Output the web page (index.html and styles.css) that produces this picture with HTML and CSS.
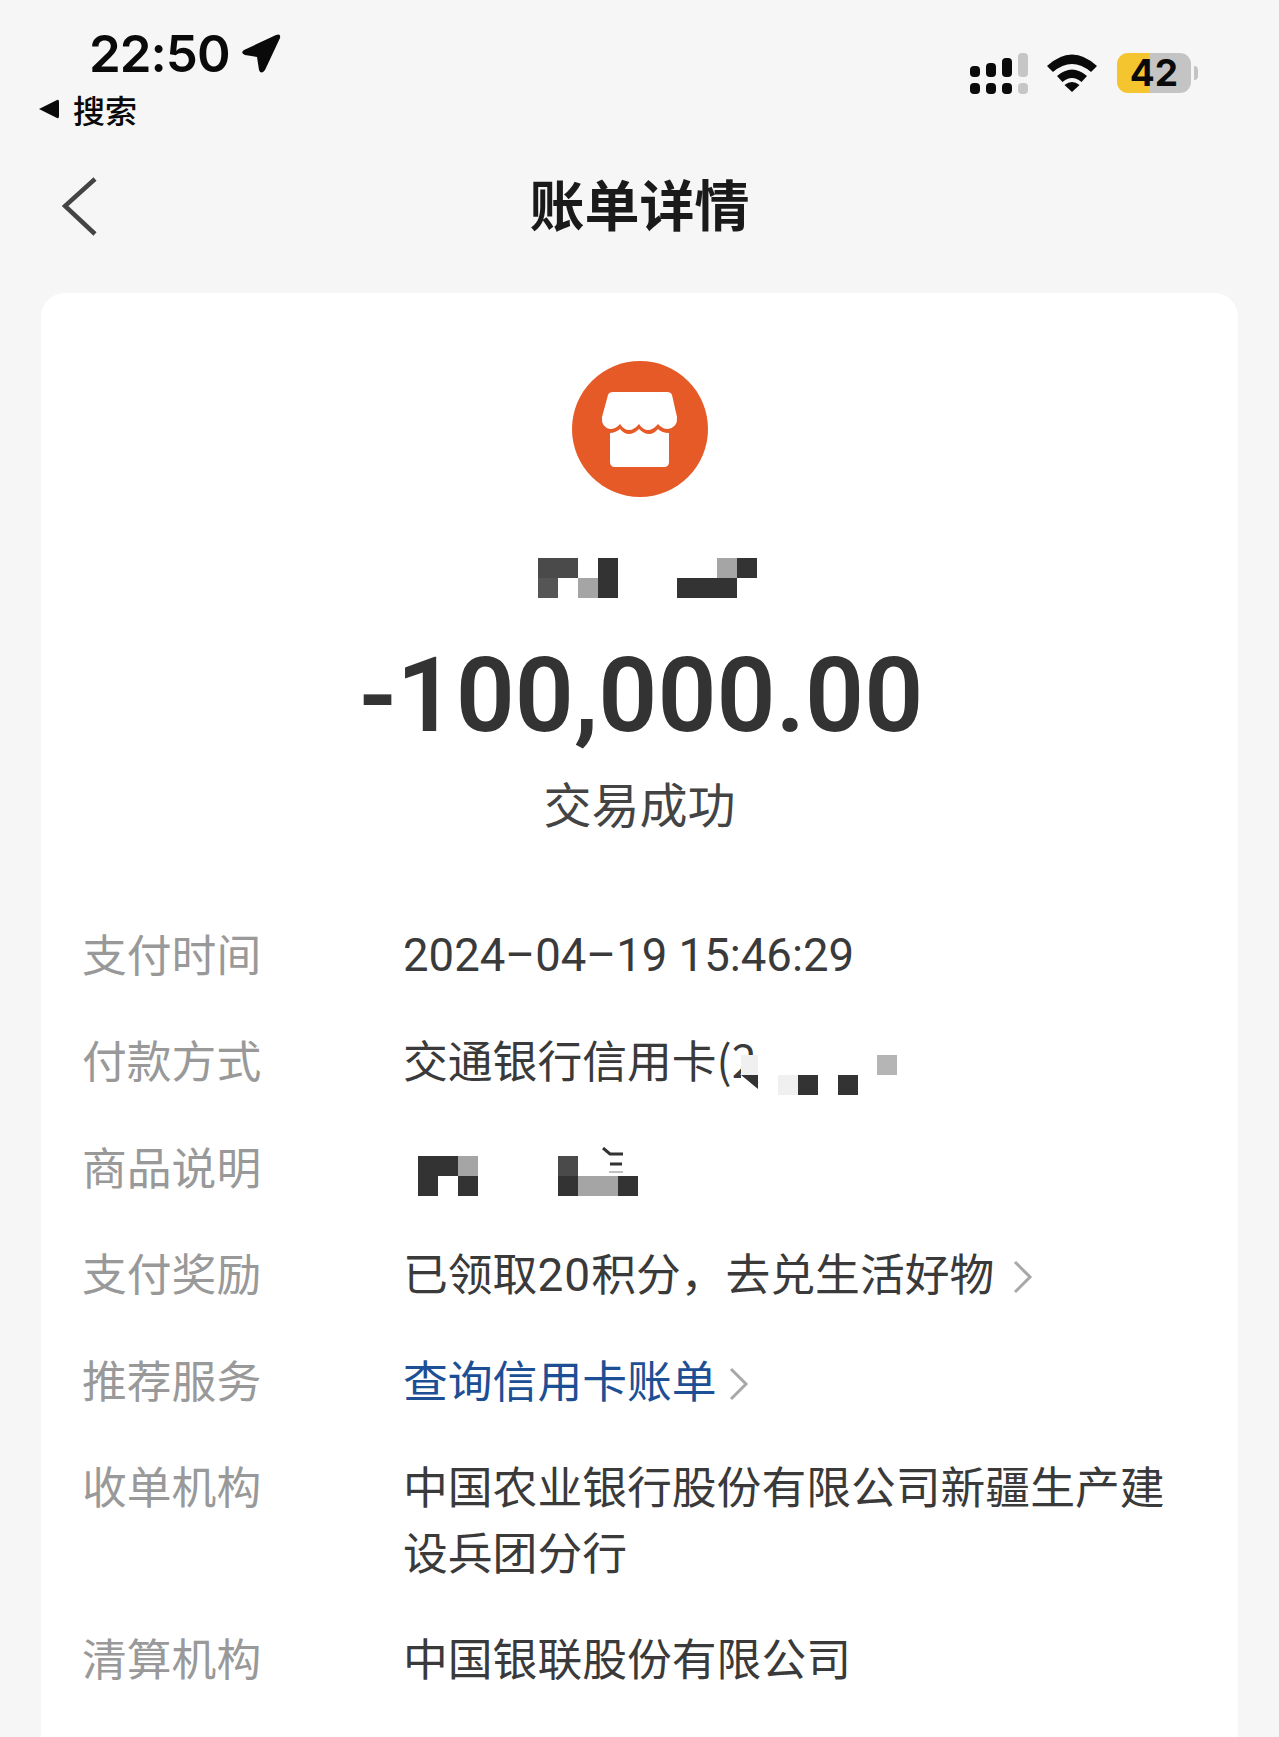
FILE: index.html
```html
<!DOCTYPE html>
<html lang="zh-CN">
<head>
    <meta charset="UTF-8">
    <meta name="viewport" content="width=device-width, initial-scale=1.0">
    <title>账单详情</title>
    <link rel="stylesheet" href="styles.css">
</head>
<body>
    <div class="status-bar">
        <div class="status-left">
            <div class="clock">
                <span class="time">22:50</span>
                <svg class="location" width="40" height="40" viewBox="0 0 40 40"><path d="M3 16 L35 1 Q40 -1 39 4 L24 36 Q20 41 18 36 L16 23 L4 21 Q-1 19 3 16 Z" fill="#0a0a0a"/></svg>
            </div>
            <div class="back-app">
                <svg width="22" height="20" viewBox="0 0 22 20"><path d="M1 10 L19 1 Q21 0 21 3 L21 17 Q21 20 19 19 Z" fill="#0a0a0a"/></svg>
                <span>搜索</span>
            </div>
        </div>
        <div class="status-right">
            <svg width="58" height="41" viewBox="0 0 58 41">
                <rect x="0" y="13" width="10" height="11" rx="4" fill="#0a0a0a"/>
                <rect x="16" y="10" width="10" height="14" rx="4" fill="#0a0a0a"/>
                <rect x="32" y="5" width="10" height="19" rx="4" fill="#0a0a0a"/>
                <rect x="48" y="0" width="10" height="24" rx="4" fill="#c6c6c6"/>
                <rect x="0" y="30" width="10" height="11" rx="4" fill="#0a0a0a"/>
                <rect x="16" y="30" width="10" height="11" rx="4" fill="#0a0a0a"/>
                <rect x="32" y="30" width="10" height="11" rx="4" fill="#0a0a0a"/>
                <rect x="48" y="30" width="10" height="11" rx="4" fill="#c6c6c6"/>
            </svg>
            <svg class="wifi" width="50" height="38" viewBox="0 0 50 38">
                <path d="M0 12 Q25 -11 50 12 L44 18 Q25 2 6 18 Z" fill="#0a0a0a"/>
                <path d="M10 22 Q25 9 40 22 L34.500 28 Q25 20 15.500 28 Z" fill="#0a0a0a"/>
                <path d="M17.500 31 Q25 25 32.500 31 L25 38 Z" fill="#0a0a0a"/>
            </svg>
            <div class="battery"><span>42</span></div>
            <div class="battery-nub"></div>
        </div>
    </div>

    <div class="nav-bar">
        <svg class="nav-back" width="36" height="60" viewBox="0 0 36 60"><path d="M33 2 L3 29 L33 57" fill="none" stroke="#444" stroke-width="4.500"/></svg>
        <h1>账单详情</h1>
    </div>

    <div class="card">
        <div class="shop-icon">
            <svg width="136" height="136" viewBox="0 0 136 136">
                <circle cx="68" cy="68" r="68" fill="#e65a27"/>
                <path d="M41 31 H95 Q99 31 100 34 L105 56 Q106 66 96 68 Q90 68 86 63 Q81 69 76 69 Q71 69 67 63 Q62 69 57 69 Q52 69 48 63 Q44 68 38 68 Q29 66 30 56 L36 34 Q37 31 41 31 Z" fill="#fff"/>
                <path d="M38 72 Q43 72 48 68 Q52 73 57 73 Q62 73 67 68 Q72 73 77 73 Q82 73 86 68 Q90 72 97 72 V101 Q97 106 92 106 H43 Q38 106 38 101 Z" fill="#fff"/>
            </svg>
        </div>
        <svg class="mosaic-name" width="219" height="40" viewBox="0 0 219 40">
            <rect x="0" y="0" width="40" height="20" fill="#4a4a4a"/>
            <rect x="0" y="20" width="20" height="20" fill="#555"/>
            <rect x="40" y="20" width="20" height="20" fill="#a5a5a5"/>
            <rect x="60" y="0" width="20" height="40" fill="#333"/>
            <rect x="139" y="20" width="60" height="20" fill="#333"/>
            <rect x="179" y="0" width="20" height="20" fill="#a5a5a5"/>
            <rect x="199" y="0" width="20" height="20" fill="#333"/>
        </svg>
        <div class="amount">-100,000.00</div>
        <div class="state">交易成功</div>

        <div class="rows">
            <div class="row">
                <div class="label">支付时间</div>
                <div class="value num">2024–04–19 15:46:29</div>
            </div>
            <div class="row">
                <div class="label">付款方式</div>
                <div class="value masked">
                    <span class="card-name">交通银行信用卡(2</span>
                    <svg class="mosaic-card" width="156" height="40" viewBox="0 0 156 40">
                        <rect x="0" y="0" width="20" height="40" fill="#fff"/>
                        <rect x="0" y="0" width="17" height="20" fill="#f0f0f0"/>
                        <path d="M0 20 H17 V34 Z" fill="#333"/>
                        <rect x="37" y="20" width="20" height="20" fill="#f0f0f0"/>
                        <rect x="57" y="20" width="20" height="20" fill="#333"/>
                        <rect x="97" y="20" width="20" height="20" fill="#333"/>
                        <rect x="136" y="0" width="20" height="20" fill="#b5b5b5"/>
                    </svg>
                </div>
            </div>
            <div class="row">
                <div class="label">商品说明</div>
                <div class="value">
                    <svg class="mosaic-item" width="220" height="50" viewBox="0 0 220 50">
                        <rect x="0" y="9" width="40" height="20" fill="#333"/>
                        <rect x="40" y="9" width="20" height="20" fill="#a5a5a5"/>
                        <rect x="0" y="29" width="20" height="20" fill="#333"/>
                        <rect x="40" y="29" width="20" height="20" fill="#333"/>
                        <rect x="140" y="9" width="20" height="20" fill="#4a4a4a"/>
                        <rect x="140" y="29" width="20" height="20" fill="#333"/>
                        <rect x="160" y="29" width="40" height="20" fill="#a5a5a5"/>
                        <rect x="200" y="29" width="20" height="20" fill="#333"/>
                        <path d="M185 1 L192 7 H205 M192 17 H204" stroke="#333" stroke-width="3" fill="none"/>
                        <path d="M191 25 H205" stroke="#aaa" stroke-width="1.500" fill="none"/>
                    </svg>
                </div>
            </div>
            <div class="row">
                <div class="label">支付奖励</div>
                <div class="value">已领取<span class="digits">20</span>积分，去兑生活好物<svg class="arrow wide" width="22" height="36" viewBox="0 0 22 36"><path d="M3 3 L18 18 L3 33" fill="none" stroke="#a8a8a8" stroke-width="3"/></svg></div>
            </div>
            <div class="row">
                <div class="label">推荐服务</div>
                <div class="value link">查询信用卡账单<svg class="arrow" width="22" height="36" viewBox="0 0 22 36"><path d="M3 3 L18 18 L3 33" fill="none" stroke="#a8a8a8" stroke-width="3"/></svg></div>
            </div>
            <div class="row">
                <div class="label">收单机构</div>
                <div class="value">中国农业银行股份有限公司新疆生产建设兵团分行</div>
            </div>
            <div class="row">
                <div class="label">清算机构</div>
                <div class="value">中国银联股份有限公司</div>
            </div>
        </div>
    </div>
</body>
</html>
```

FILE: styles.css
```css
html, body {
    margin: 0;
    height: 1737px;
    overflow: hidden;
}
body {
    background-color: #f6f6f6;
    font-family: "Noto Sans CJK SC", "Liberation Sans", sans-serif;
    color: #333;
}
svg {
    display: block;
    flex: none;
}

/* status bar */
.status-bar {
    display: flex;
    justify-content: space-between;
    height: 142px;
    box-sizing: border-box;
    padding: 26px 81px 0 38px;
    color: #0a0a0a;
}
.clock {
    display: flex;
    align-items: center;
    gap: 11px;
    padding-left: 51px;
    height: 56px;
}
.time {
    font-family: Inter, sans-serif;
    font-size: 51px;
    font-weight: 600;
    letter-spacing: -1px;
    line-height: 56px;
}
.back-app {
    display: flex;
    align-items: center;
    gap: 13px;
    height: 44px;
    margin-top: 5px;
    font-size: 32px;
    font-weight: 500;
    line-height: 44px;
}
.status-right {
    display: flex;
    align-items: center;
    height: 46px;
    margin-top: 24px;
}
.wifi {
    margin-left: 19px;
}
.battery {
    width: 74px;
    height: 40px;
    margin-left: 20px;
    border-radius: 11px;
    background: linear-gradient(to right, #f5c52f 43%, #c4c4c4 43%);
    text-align: center;
}
.battery span {
    font-family: Inter, sans-serif;
    font-size: 37px;
    font-weight: 700;
    line-height: 40px;
    display: block;
}
.battery-nub {
    width: 4px;
    height: 14px;
    margin-left: 3px;
    border-radius: 0 4px 4px 0;
    background: #c4c4c4;
}

/* nav */
.nav-bar {
    position: relative;
    height: 151px;
    text-align: center;
}
.nav-back {
    position: absolute;
    left: 62px;
    top: 35px;
}
.nav-bar h1 {
    margin: 0;
    padding-top: 21px;
    font-size: 55px;
    font-weight: 700;
    line-height: 78px;
    color: #1a1a1a;
}

/* card */
.card {
    margin: 0 41px;
    height: 1444px;
    background: white;
    border-radius: 24px 24px 0 0;
    padding-top: 68px;
    box-sizing: border-box;
    display: flex;
    flex-direction: column;
    align-items: center;
}
.mosaic-name {
    margin: 61px 0 0 16px;
}
.amount {
    margin: 33px 0 0 3px;
    font-family: Roboto, sans-serif;
    font-size: 103.500px;
    font-weight: 600;
    line-height: 130px;
    color: #333;
}
.state {
    margin-top: 8px;
    font-size: 48px;
    line-height: 66px;
    color: #444;
}
.rows {
    align-self: stretch;
    margin-top: 85px;
    padding: 0 60px 0 41px;
    display: flex;
    flex-direction: column;
    gap: 40.400px;
}
.row {
    display: flex;
    font-size: 44.800px;
    line-height: 66px;
}
.label {
    width: 321px;
    flex: none;
    color: #999;
}
.value {
    flex: 1;
    color: #3a3a3a;
    min-width: 0;
}
.num {
    font-family: Roboto, sans-serif;
    font-size: 45.500px;
    height: 66px;
    line-height: 72px;
}
.digits {
    font-family: Roboto, sans-serif;
    font-size: 46px;
    letter-spacing: 1px;
    line-height: 1;
}
.masked {
    display: flex;
    align-items: flex-start;
}
.card-name {
    white-space: nowrap;
    flex: none;
}
.mosaic-card {
    margin: 29px 0 -3px -16px;
}
.mosaic-item {
    margin: 14px 0 0 15px;
}
.link {
    color: #1d4f94;
}
.arrow {
    display: inline-block;
    margin-left: 11px;
    vertical-align: -4px;
}
.arrow.wide {
    margin-left: 18px;
}
```
